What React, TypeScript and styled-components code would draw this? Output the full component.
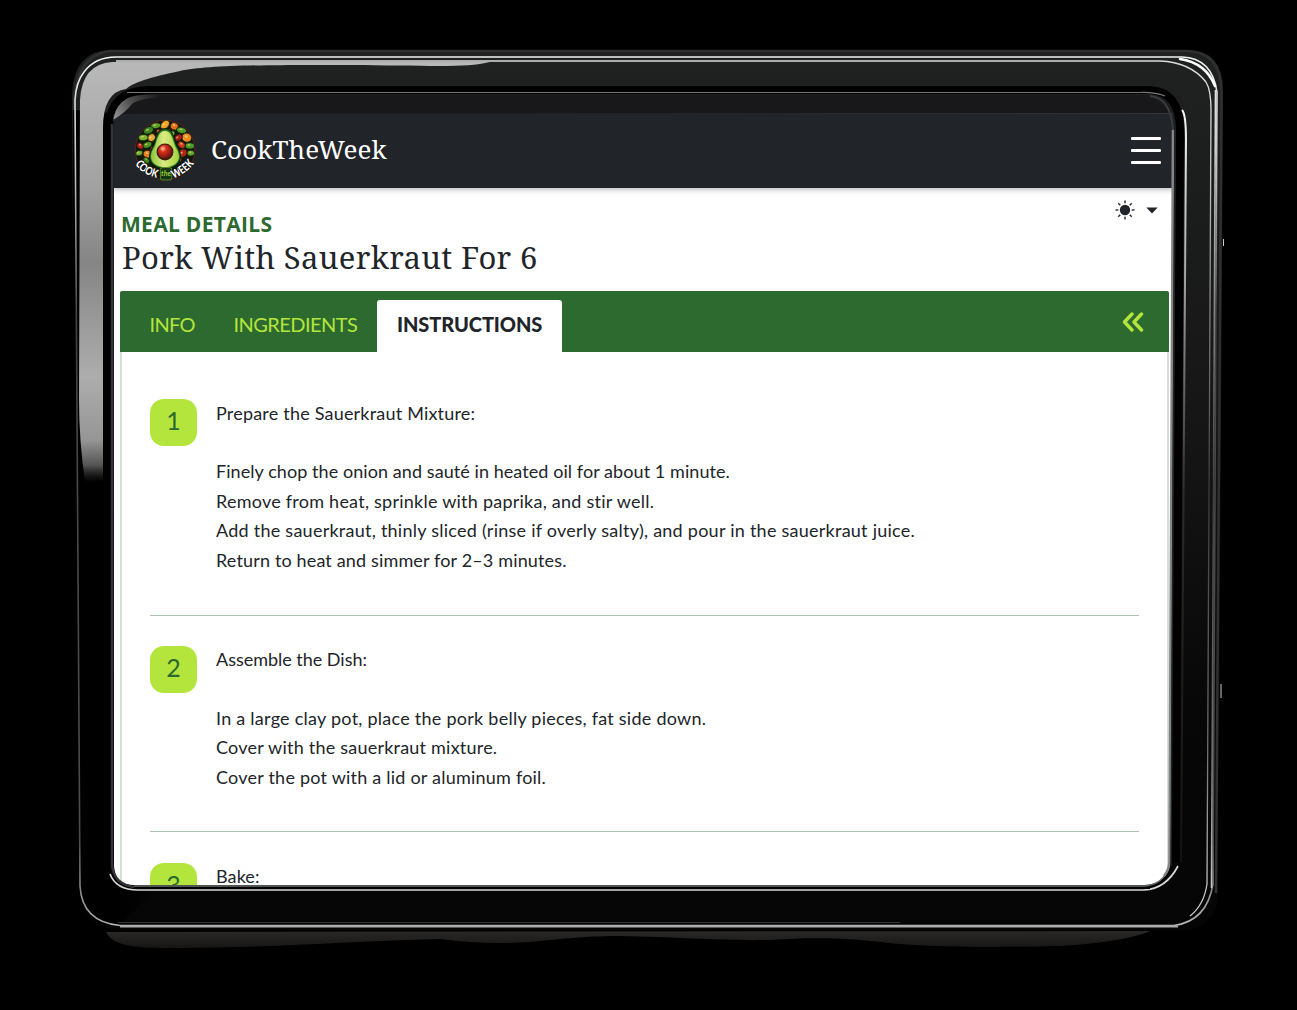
import React from 'react';
import styled, { createGlobalStyle } from 'styled-components';

const sans = '"Lato", "Open Sans", "Liberation Sans", sans-serif';
const serif = '"Noto Serif", "Liberation Serif", serif';
const green = '#2d6a2f';
const lime = '#b4e53c';
const ink = '#212529';

const GlobalStyle = createGlobalStyle`
  * { box-sizing: border-box; }
  body { margin: 0; background: #000; }
`;

const Stage = styled.main`
  position: relative;
  width: 1297px;
  height: 1010px;
  padding: 113px 123px 0 113px;
  background: #000;
  overflow: hidden;
`;

const DeviceFrame = styled.svg`
  position: absolute;
  inset: 0;
  pointer-events: none;
`;

const Screen = styled.div`
  height: 774px;
  background: #fff;
  overflow: hidden;
  color: ${ink};
  font-family: ${sans};
`;

const Navbar = styled.header`
  display: flex;
  align-items: center;
  justify-content: space-between;
  height: 75px;
  padding: 0 13px 2px 21px;
  background: #212529;
  border-top: 1px solid #343637;
  box-shadow: 0 2px 5px rgba(0, 0, 0, 0.25);
`;

const Brand = styled.div`
  display: flex;
  align-items: center;
  gap: 15px;
`;

const BrandName = styled.span`
  padding-bottom: 2px;
  color: #fff;
  font: 400 26px/36px ${serif};
  letter-spacing: 0.1px;
`;

const MenuButton = styled.button`
  display: flex;
  flex-direction: column;
  justify-content: space-between;
  width: 30px;
  height: 27px;
  padding: 0;
  border: 0;
  background: none;
`;

const MenuBar = styled.span`
  height: 3px;
  border-radius: 1px;
  background: #fff;
`;

const PageHead = styled.section`
  display: flex;
  justify-content: space-between;
  height: 103px;
  padding: 12px 16px 0 9px;
`;

const Headings = styled.div`
  padding-top: 10px;
`;

const Eyebrow = styled.h2`
  margin: 0 0 0 -1px;
  color: ${green};
  font: 700 21px/28px "Open Sans", sans-serif;
  letter-spacing: 0.3px;
`;

const Title = styled.h1`
  margin: 0;
  font: 400 31px/39px ${serif};
  letter-spacing: 0.34px;
`;

const ThemeToggle = styled.div`
  display: flex;
  align-items: center;
  gap: 11px;
  height: 20px;
`;

const Card = styled.section`
  margin: 0 5px 0 7px;
  border: solid #cfe0d4;
  border-width: 0 2px;
  border-radius: 3px 3px 0 0;
`;

const TabBar = styled.nav`
  display: flex;
  align-items: flex-end;
  height: 61px;
  margin: 0 -2px;
  padding: 0 25px 0 10px;
  border-radius: 2px 2px 0 0;
  background: ${green};
`;

const Tab = styled.button<{ $active?: boolean; $width: number; $tracking: number }>`
  width: ${(p) => p.$width}px;
  height: 52px;
  padding: 0 0 5px ${(p) => (p.$active ? 20 : 19.5)}px;
  border: 0;
  border-radius: 3px 3px 0 0;
  background: ${(p) => (p.$active ? '#fff' : 'transparent')};
  color: ${(p) => (p.$active ? ink : lime)};
  font: ${(p) => (p.$active ? 900 : 400)} 20px/28px ${sans};
  letter-spacing: ${(p) => p.$tracking}px;
  text-align: left;
  white-space: nowrap;
`;

const Collapse = styled.button`
  display: flex;
  margin: 0 0 20px auto;
  padding: 0;
  border: 0;
  background: none;
`;

const Steps = styled.ol`
  display: flex;
  flex-direction: column;
  gap: 29.4px;
  margin: 0;
  padding: 46.6px 28px 0;
  list-style: none;
`;

const Step = styled.li`
  display: flex;
  gap: 19px;
  padding-bottom: 39.5px;
  border-bottom: 1px solid #afc3b4;
`;

const Badge = styled.span`
  display: flex;
  flex: none;
  justify-content: center;
  width: 47px;
  height: 47px;
  margin-top: 0.9px;
  border-radius: 14px;
  background: ${lime};
  color: ${green};
  font: 400 25px/42px ${sans};
`;

const Lines = styled.div`
  display: flex;
  flex-direction: column;
`;

const Line = styled.p<{ $tracking: number; $lead?: boolean }>`
  margin: 0 0 ${(p) => (p.$lead ? 29.4 : 0)}px;
  font-size: 18px;
  line-height: 29.4px;
  letter-spacing: ${(p) => p.$tracking}px;
  white-space: nowrap;
`;

type TextLine = { text: string; tracking: number };

const steps: TextLine[][] = [
  [
    { text: 'Prepare the Sauerkraut Mixture:', tracking: 0.2 },
    { text: 'Finely chop the onion and sauté in heated oil for about 1 minute.', tracking: 0.07 },
    { text: 'Remove from heat, sprinkle with paprika, and stir well.', tracking: 0.24 },
    { text: 'Add the sauerkraut, thinly sliced (rinse if overly salty), and pour in the sauerkraut juice.', tracking: 0.25 },
    { text: 'Return to heat and simmer for 2–3 minutes.', tracking: 0.15 },
  ],
  [
    { text: 'Assemble the Dish:', tracking: -0.02 },
    { text: 'In a large clay pot, place the pork belly pieces, fat side down.', tracking: 0.25 },
    { text: 'Cover with the sauerkraut mixture.', tracking: 0.22 },
    { text: 'Cover the pot with a lid or aluminum foil.', tracking: 0.22 },
  ],
  [{ text: 'Bake:', tracking: 0.1 }],
];

const veg: [number, number, number, number, string][] = [
  [30, 5.500, 5, 3.500, '#f0a224'], [21, 6.500, 5, 2.800, '#5f9e22'], [39, 7, 4, 3.600, '#e2701a'], [14, 11, 5, 3.400, '#3d8420'],
  [46, 11, 5, 3, '#4c9a25'], [17, 18, 4, 3.600, '#e9a83a'], [9, 18, 4.500, 3, '#7db52c'], [6, 26, 3.500, 2.800, '#c22318'],
  [13, 25, 4.500, 3, '#4f9222'], [51, 18, 4.800, 4.400, '#ee8b22'], [43, 18, 4, 3, '#a92018'], [54, 26, 4.500, 3, '#4a9a26'],
  [46, 25, 4, 3, '#cf3a1b'], [5, 33, 3.600, 2.600, '#73ac2b'], [13, 34, 4.200, 3.800, '#ee7a1c'], [47, 33, 4.600, 3.800, '#b72418'],
  [55, 33, 3.600, 2.800, '#66a42a'], [12, 40, 3.600, 2.400, '#3f8421'], [24, 12, 2.600, 2, '#d12c1a'], [18, 29, 2.400, 2.400, '#d22d1b'],
  [37, 14, 2.600, 2.400, '#87b92b'], [43, 39, 3, 2.400, '#e46c1d'], [18, 38, 2.600, 2.400, '#b81f18'], [34, 11, 2, 1.600, '#c42a18'],
];

function Logo() {
  return (
    <svg width="62" height="62" viewBox="0 0 60 60">
      <defs>
        <linearGradient id="flesh" x1="0" x2="1">
          <stop offset="0" stopColor="#8cc43a" />
          <stop offset=".45" stopColor="#dceb84" />
          <stop offset="1" stopColor="#a5d040" />
        </linearGradient>
        <radialGradient id="seed" cx=".35" cy=".3" r=".8">
          <stop offset="0" stopColor="#ffd0a0" />
          <stop offset=".3" stopColor="#d8301a" />
          <stop offset="1" stopColor="#5a0f0c" />
        </radialGradient>
        <path id="arcL" d="M1 43.500Q7 53.500 24 57.500" />
        <path id="arcR" d="M38 57.500Q51 53 59.500 41.500" />
      </defs>
      <circle cx="30" cy="30" r="28.800" fill="#10180f" stroke="#6b2421" strokeWidth=".8" />
      {veg.map(([x, y, rx, ry, c], i) => (
        <g key={i} transform={`rotate(${((i * 37) % 90) - 45} ${x} ${y})`}>
          <ellipse cx={x} cy={y} rx={rx} ry={ry} fill={c} stroke="#0d1a0c" strokeWidth=".7" />
          <ellipse cx={x - 0.8} cy={y - 0.8} rx={rx / 3} ry={ry / 4} fill="#f5e9a0" opacity=".6" />
        </g>
      ))}
      <path d="M30 9.500c-6.500 0-8 6-10 13-2 6-5 8-5 13.500 0 7.500 7 12 15 12s15-4.500 15-12c0-5.500-3-7.500-5-13.500-2-7-3.500-13-10-13z" fill="#2a7a1e" stroke="#0b200b" />
      <path d="M30 11.500c-5.500 0-7 6-9 12.500-1.500 5-4.500 7-4.500 12.500 0 6.500 6.500 10 13.500 10s13.500-3.500 13.500-10c0-5.500-3-7.500-4.500-12.500-2-6.500-3.500-12.500-9-12.500z" fill="url(#flesh)" />
      <circle cx="30" cy="32" r="8.200" fill="#3c1d0c" />
      <circle cx="30" cy="31.500" r="6.800" fill="url(#seed)" />
      <rect x="25.500" y="47" width="11" height="12" rx="2" fill="#153613" stroke="#6f9c25" strokeWidth=".8" />
      <text x="31" y="55.500" textAnchor="middle" fontFamily="Lato, sans-serif" fontSize="7" fontStyle="italic" fontWeight="700" fill="#9cc530">the</text>
      <g fontFamily="Lato, sans-serif" fontWeight="900" fontSize="11" fill="#fff" stroke="#111" strokeWidth="1.400" paintOrder="stroke">
        <text textLength="25.500" lengthAdjust="spacingAndGlyphs"><textPath href="#arcL">COOK</textPath></text>
        <text textLength="25" lengthAdjust="spacingAndGlyphs"><textPath href="#arcR">WEEK</textPath></text>
      </g>
    </svg>
  );
}

function SunIcon() {
  return (
    <svg width="20" height="20" viewBox="0 0 20 20">
      <circle cx="10" cy="10" r="5.200" fill={ink} />
      {[0, 45, 90, 135, 180, 225, 270, 315].map((a) => (
        <path key={a} d="M10 .5V3.300" stroke={ink} strokeWidth="1.400" transform={`rotate(${a} 10 10)`} />
      ))}
    </svg>
  );
}

function Tablet() {
  return (
    <DeviceFrame width="1297" height="1010" viewBox="0 0 1297 1010" fill="none">
      <defs>
        <linearGradient id="bezel" x1="0" y1="48" x2="0" y2="932" gradientUnits="userSpaceOnUse">
          <stop offset="0" stopColor="#202121" />
          <stop offset=".45" stopColor="#151515" />
          <stop offset=".75" stopColor="#070707" />
          <stop offset="1" stopColor="#050505" />
        </linearGradient>
        <linearGradient id="leftDark" x1="72" y1="0" x2="160" y2="0" gradientUnits="userSpaceOnUse">
          <stop offset="0" stopColor="#000" />
          <stop offset=".5" stopColor="#000" />
          <stop offset="1" stopColor="#000" stopOpacity="0" />
        </linearGradient>
        <linearGradient id="glare" x1="0" y1="60" x2="0" y2="482" gradientUnits="userSpaceOnUse">
          <stop offset="0" stopColor="#b9b9b9" />
          <stop offset=".3" stopColor="#a2a2a2" />
          <stop offset=".48" stopColor="#858585" />
          <stop offset=".75" stopColor="#adadad" />
          <stop offset=".9" stopColor="#969696" />
          <stop offset=".96" stopColor="#555" />
          <stop offset="1" stopColor="#333" stopOpacity="0" />
        </linearGradient>
        <linearGradient id="edge" x1="0" y1="50" x2="0" y2="930" gradientUnits="userSpaceOnUse">
          <stop offset="0" stopColor="#f4f4f4" />
          <stop offset=".15" stopColor="#b8b8b8" />
          <stop offset=".3" stopColor="#454545" />
          <stop offset=".9" stopColor="#4c4c4c" />
          <stop offset="1" stopColor="#bbb" />
        </linearGradient>
        <linearGradient id="edgeR" x1="0" y1="50" x2="0" y2="930" gradientUnits="userSpaceOnUse">
          <stop offset="0" stopColor="#eee" />
          <stop offset=".12" stopColor="#ccc" />
          <stop offset=".3" stopColor="#808080" />
          <stop offset=".5" stopColor="#3c3c3c" />
          <stop offset=".8" stopColor="#707070" />
          <stop offset="1" stopColor="#ddd" />
        </linearGradient>
        <linearGradient id="innerR" x1="0" y1="95" x2="0" y2="890" gradientUnits="userSpaceOnUse">
          <stop offset="0" stopColor="#fff" />
          <stop offset=".25" stopColor="#999" />
          <stop offset=".5" stopColor="#2b2b2b" />
          <stop offset="1" stopColor="#111" />
        </linearGradient>
        <linearGradient id="foot" x1="0" y1="931" x2="0" y2="949" gradientUnits="userSpaceOnUse">
          <stop offset="0" stopColor="#2a2927" />
          <stop offset="1" stopColor="#151413" />
        </linearGradient>
        <linearGradient id="lens" x1="113" y1="120" x2="160" y2="94" gradientUnits="userSpaceOnUse">
          <stop offset="0" stopColor="#999" />
          <stop offset=".5" stopColor="#484848" />
          <stop offset="1" stopColor="#19191a" />
        </linearGradient>
      </defs>

      <path d="M106 932C112 945 132 949 180 948C270 948 350 941 440 939C470 943 500 944 530 942C570 938 590 936 620 936C680 937 720 941 770 940C810 937 850 938 880 942C920 947 990 948 1060 946C1110 943 1140 936 1150 931Z" fill="url(#foot)" />

      <path
        fillRule="evenodd"
        fill="url(#bezel)"
        d="M112 50H1186Q1223 50 1223 90L1218 893Q1216 929 1182 930H126Q78 930 77 886L72 94Q74 50 112 50Z
           M114 113V866Q115 885 134 885H1144Q1168 884 1169 862L1173 113Z"
      />
      <path d="M73 110V470L77 890Q80 925 118 926L160 888H134Q113 886 113 862V113Z" fill="url(#leftDark)" />
      <path d="M74 110Q74 54 112 51H1186Q1221 51 1221.500 92L1216 893" stroke="#303030" strokeWidth="2.500" />

      <path d="M80 100Q82 64 112 62H490C470 67 440 66 400 65.500C270 64 210 65 180 71C150 77 132 83 126 89Q103 92 103 128V482H85Q79 440 79 400Z" fill="url(#glare)" />

      <path d="M84 72Q95 57 116 57H1182Q1212 58 1217 92L1213 884Q1207 921 1174 925.500H120Q82 922 80 886L75 100Q76 82 84 72" stroke="url(#edge)" strokeWidth="1.600" />
      <path d="M116 61H1160Q1190 62 1206 82" stroke="#dcdcdc" strokeWidth="1.400" />
      <path d="M120 926.500H1178" stroke="#aaa" strokeWidth="2" />
      <path d="M118 922.500H900" stroke="#343434" strokeWidth="1" />
      <path d="M1180 59Q1206 63 1215 86" stroke="#fff" strokeWidth="2.600" strokeLinecap="round" />
      <path d="M1206 82Q1211 90 1211 110L1207 884Q1204 905 1190 916" stroke="url(#edgeR)" strokeWidth="1.300" />
      <path d="M1215.500 90L1211.500 888" stroke="url(#edgeR)" strokeWidth="1.600" />

      <path d="M109 862V128Q110 91 148 90H1150Q1180 92 1180 130L1176 862" stroke="#000" strokeWidth="8" />
      <path d="M127 92.500H1140Q1155 92 1165 96" stroke="#777" strokeWidth="1.200" />
      <path d="M1182 110Q1186 114 1186 140L1181 862" stroke="url(#innerR)" strokeWidth="2" />

      <path d="M113 114V122Q116 96 142 95H1146Q1168 96 1172 113Z" fill="#18181a" />
      <path d="M113 122Q116 96 142 95H210C170 96 140 97 132 104Q126 112 113 120Z" fill="url(#lens)" />
      <path d="M1150 96Q1171 98 1173 130" stroke="#3a3d3f" strokeWidth="2" />

      <path d="M112 124V864Q113 884 134 887" stroke="#33333a" strokeWidth="2.500" />
      <path d="M110 874Q116 890 138 890H1144Q1166 889 1178 866" stroke="#d8d8d8" strokeWidth="1.700" />
      <path d="M134 886H1144Q1160 885 1167 872" stroke="#68706c" strokeWidth="1.500" />
      <path d="M134 888H1150" stroke="#000" strokeWidth="1.800" />
      <path d="M1173 130L1169.500 862Q1169 870 1164 876" stroke="#858585" strokeWidth="2.600" />
      <path d="M1175 130L1171 866" stroke="#222" strokeWidth="1.500" />
      <path d="M1223.500 239v7M1221 684v14" stroke="#ccc" strokeWidth="1" />
    </DeviceFrame>
  );
}

export default function App() {
  return (
    <>
      <GlobalStyle />
      <Stage>
        <Screen>
          <Navbar>
            <Brand>
              <Logo />
              <BrandName>CookTheWeek</BrandName>
            </Brand>
            <MenuButton aria-label="Menu">
              <MenuBar />
              <MenuBar />
              <MenuBar />
            </MenuButton>
          </Navbar>
          <PageHead>
            <Headings>
              <Eyebrow>MEAL DETAILS</Eyebrow>
              <Title>Pork With Sauerkraut For 6</Title>
            </Headings>
            <ThemeToggle>
              <SunIcon />
              <svg width="12" height="7" viewBox="0 0 12 7">
                <path d="M.3.500h11.400L6 6.500z" fill={ink} />
              </svg>
            </ThemeToggle>
          </PageHead>
          <Card>
            <TabBar>
              <Tab $width={84} $tracking={-0.7}>INFO</Tab>
              <Tab $width={163} $tracking={-0.54}>INGREDIENTS</Tab>
              <Tab $width={185} $tracking={-0.1} $active>INSTRUCTIONS</Tab>
              <Collapse aria-label="Collapse">
                <svg width="22" height="20" viewBox="0 0 22 20" fill="none" stroke={lime} strokeWidth="3.400" strokeLinecap="round" strokeLinejoin="round">
                  <path d="M10 2L2.500 10L10 18M19.500 2L12 10L19.500 18" />
                </svg>
              </Collapse>
            </TabBar>
            <Steps>
              {steps.map((lines, i) => (
                <Step key={i}>
                  <Badge>{i + 1}</Badge>
                  <Lines>
                    {lines.map((line, n) => (
                      <Line key={line.text} $tracking={line.tracking} $lead={n === 0}>
                        {line.text}
                      </Line>
                    ))}
                  </Lines>
                </Step>
              ))}
            </Steps>
          </Card>
        </Screen>
        <Tablet />
      </Stage>
    </>
  );
}
